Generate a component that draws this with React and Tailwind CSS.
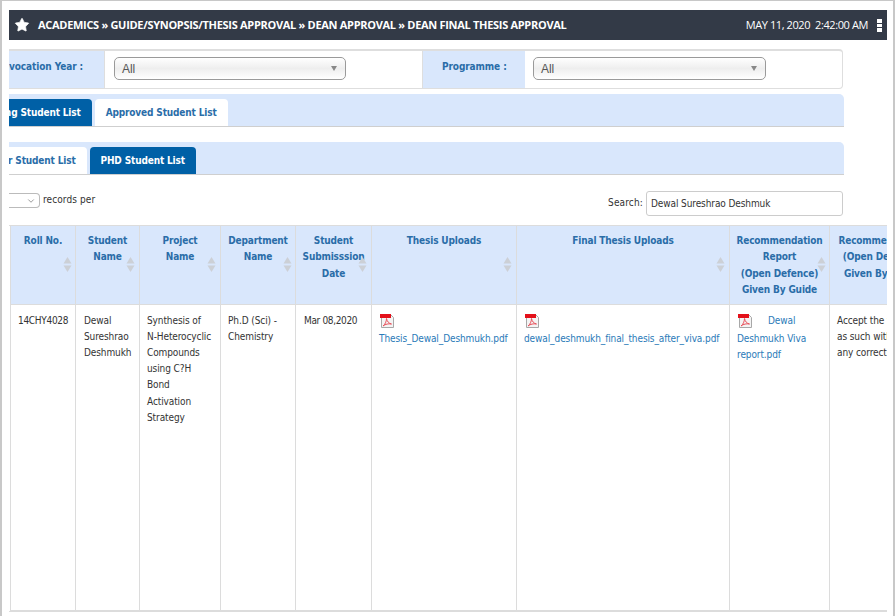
import React from 'react';
import { Star, ChevronDown } from 'lucide-react';

const BODY_FONT = "font-['DejaVu_Sans_Condensed','DejaVu_Sans',sans-serif] [font-stretch:condensed]";

const COLUMNS = [
  { title: ['Roll No.'], width: 'w-[65px]', sort: 'right-[3px]' },
  { title: ['Student', 'Name'], width: 'w-[64px]', sort: 'right-[4px]' },
  { title: ['Project', 'Name'], width: 'w-[81px]', sort: 'right-[4px]' },
  { title: ['Department', 'Name'], width: 'w-[75px]', sort: 'right-[3px]' },
  { title: ['Student', 'Submisssion', 'Date'], width: 'w-[76px]', sort: 'right-[4px]' },
  { title: ['Thesis Uploads'], width: 'w-[145px]', sort: 'right-[4px]' },
  { title: ['Final Thesis Uploads'], width: 'w-[213px]', sort: 'right-[4px]' },
  { title: ['Recommendation', 'Report', '(Open Defence)', 'Given By Guide'], width: 'w-[100px]', sort: 'right-[3px]' },
  { title: ['Recommendation', '(Open Defence)', 'Given By Guide'], width: 'w-[104px]', sort: 'right-[3px]' },
];

function PdfIcon() {
  return (
    <svg width="16" height="16" viewBox="0 0 16 16" className="inline-block align-top">
      <path d="M2.500 1.500h9l3 3v10h-12z" fill="#f4f4f4" stroke="#a8a8a8" />
      <rect x="1" y="1" width="11" height="4" fill="#e3101a" />
      <path d="M4 13c2-1.500 3.500-4.500 3.500-7.500M7.500 5.500c.5 3 2.500 5 5 5.500M4 13c2.500-2 5.500-2.500 8.500-2" fill="none" stroke="#e8505a" strokeWidth="1" />
    </svg>
  );
}

function SortArrows({ className }) {
  return (
    <svg width="9" height="15" viewBox="0 0 9 15" className={`absolute top-[31px] ${className}`}>
      <path d="M4.500 0l4 6.500H.5z" fill="#ccd0d6" />
      <path d="M4.500 15l4-6.500H.5z" fill="#ccd0d6" />
    </svg>
  );
}

function FakeSelect({ className }) {
  return (
    <div className={`flex h-[23px] items-center justify-between rounded-[5px] border border-[#9a9a9a] bg-gradient-to-b from-white via-[#eeeeee] to-white pl-[7px] pr-2 font-['Liberation_Sans',sans-serif] text-xs font-normal text-[#555] ${className}`}>
      <span>All</span>
      <span className="h-0 w-0 border-x-[3px] border-t-[5px] border-x-transparent border-t-[#888]" />
    </div>
  );
}

function TabBar({ children, className }) {
  return (
    <div className={`flex h-[33px] w-[835px] items-end gap-[3px] overflow-hidden rounded-tr-[5px] border-b border-[#cfcfcf] bg-[#d9e7fc] text-[10px] font-bold tracking-[-0.15px] ${className}`}>
      {children}
    </div>
  );
}

function Tab({ active, className, children }) {
  return (
    <div className={`flex h-[27px] shrink-0 items-center whitespace-nowrap rounded-t-[4px] px-[11px] ${active ? 'bg-[#0060a6] text-white' : 'bg-white text-[#2a6da8]'} ${className}`}>
      {children}
    </div>
  );
}

export default function App() {
  return (
    <div className={`h-[616px] w-[895px] overflow-hidden border-x-2 border-t border-[#c8c8c8] bg-white pl-[7px] pt-[9px] text-[10px] tracking-[-0.1px] text-[#333] ${BODY_FONT}`}>
      <div className="flex h-[30px] w-[878px] items-center bg-[#333a47] pl-[5px] pr-[5px] text-white [font-stretch:normal]">
        <Star size={16} fill="white" strokeWidth={1} />
        <span className="ml-[8px] font-['Open_Sans',sans-serif] text-[11px] font-bold tracking-[-0.3px]">
          ACADEMICS » GUIDE/SYNOPSIS/THESIS APPROVAL » DEAN APPROVAL » DEAN FINAL THESIS APPROVAL
        </span>
        <span className="ml-auto mr-[9px] whitespace-pre font-['Open_Sans',sans-serif] text-[11px] tracking-[-0.4px]">MAY 11, 2020&nbsp;&nbsp;2:42:00 AM</span>
        <div className="flex w-[5px] flex-col gap-[1px]">
          <span className="h-[4px] bg-white" />
          <span className="h-[3px] bg-white" />
          <span className="h-[4px] bg-white" />
        </div>
      </div>

      <div className="mt-[9px] flex h-[40px] w-[834px] items-stretch overflow-hidden rounded-r-[4px] border-y border-r border-y-[#dedede] border-r-[#dedede] border-t-2 text-[10px] font-bold text-[#2a6da8]">
        <div className="flex w-[96px] justify-end whitespace-nowrap border-r border-[#dedede] bg-[#d9e7fc] pr-[21px] pt-[8px]">Convocation Year :</div>
        <div className="w-[318px] border-r border-[#dedede] pl-[9px] pt-[6px]">
          <FakeSelect className="w-[232px]" />
        </div>
        <div className="w-[102px] bg-[#d9e7fc] pl-[19px] pt-[8px]">Programme :</div>
        <div className="pl-[8px] pt-[6px]">
          <FakeSelect className="w-[233px]" />
        </div>
      </div>

      <TabBar className="mt-[5px]">
        <Tab active className="ml-[-43px]">Pending Student List</Tab>
        <Tab>Approved Student List</Tab>
      </TabBar>

      <TabBar className="mt-[15px]">
        <Tab className="ml-[-42px]">Master Student List</Tab>
        <Tab active>PHD Student List</Tab>
      </TabBar>

      <div className="mt-[16px] flex h-[25px] w-[834px] items-start overflow-hidden">
        <div className="mt-[2px] flex h-[15px] w-[31px] shrink-0 items-center justify-end rounded-r-[4px] border border-l-0 border-[#bbb] pr-[3px]">
          <ChevronDown size={10} className="text-[#888]" />
        </div>
        <span className="ml-[3px] mt-[1px] tracking-[0.1px]">records per</span>
        <span className="ml-auto mr-[3px] mt-[4px] tracking-[0.15px]">Search:</span>
        <div className="flex h-[25px] w-[197px] items-center rounded-[3px] border border-[#ccc] pl-[4px]">Dewal Sureshrao Deshmuk</div>
      </div>

      <div className="mt-[9px] w-[878px] overflow-hidden border-y border-[#dcdcdc] pl-px">
        <table className="h-[385px] w-[923px] table-fixed border-collapse">
          <colgroup>
            {COLUMNS.map((c, i) => <col key={i} className={c.width} />)}
          </colgroup>
          <thead>
            <tr className="h-[78px]">
              {COLUMNS.map((c, i) => (
                <th key={i} className="relative border-x border-[#dcdcdc] bg-[#d9e7fc] px-0 pt-[7px] align-top text-center font-bold leading-[16.300px] tracking-[-0.15px] text-[#2a6da8]">
                  {c.title.map((line) => <div key={line} className="whitespace-nowrap">{line}</div>)}
                  <SortArrows className={c.sort} />
                </th>
              ))}
            </tr>
          </thead>
          <tbody>
            <tr className="align-top leading-[16.200px]">
              <td className="whitespace-nowrap border border-[#dcdcdc] pl-[7px] pt-[8px] tracking-[-0.3px]">14CHY4028</td>
              <td className="whitespace-nowrap border border-[#dcdcdc] pl-2 pt-[8px]">Dewal<br />Sureshrao<br />Deshmukh</td>
              <td className="whitespace-nowrap border border-[#dcdcdc] pl-[7px] pt-[8px]">Synthesis of<br />N-Heterocyclic<br />Compounds<br />using C?H<br />Bond<br />Activation<br />Strategy</td>
              <td className="whitespace-nowrap border border-[#dcdcdc] pl-[7px] pt-[8px]">Ph.D (Sci) -<br />Chemistry</td>
              <td className="whitespace-nowrap border border-[#dcdcdc] pl-2 pt-[8px] tracking-[-0.35px]">Mar 08,2020</td>
              <td className="whitespace-nowrap border border-[#dcdcdc] pl-[7px] pt-[8px] text-[#2a7ab8]"><PdfIcon /><br /><div className="mt-[2px]">Thesis_Dewal_Deshmukh.pdf</div></td>
              <td className="whitespace-nowrap border border-[#dcdcdc] pl-[7px] pt-[8px] text-[#2a7ab8]"><PdfIcon /><br /><div className="mt-[2px]">dewal_deshmukh_final_thesis_after_viva.pdf</div></td>
              <td className="whitespace-nowrap border border-[#dcdcdc] pl-[7px] pt-[8px] text-[#2a7ab8]"><PdfIcon /><span className="ml-[15px]">Dewal</span><br /><div className="mt-[2px]">Deshmukh Viva<br />report.pdf</div></td>
              <td className="whitespace-nowrap border border-[#dcdcdc] pl-[7px] pt-[8px]">Accept the thesis<br />as such without<br />any corrections</td>
            </tr>
          </tbody>
        </table>
      </div>
    </div>
  );
}
